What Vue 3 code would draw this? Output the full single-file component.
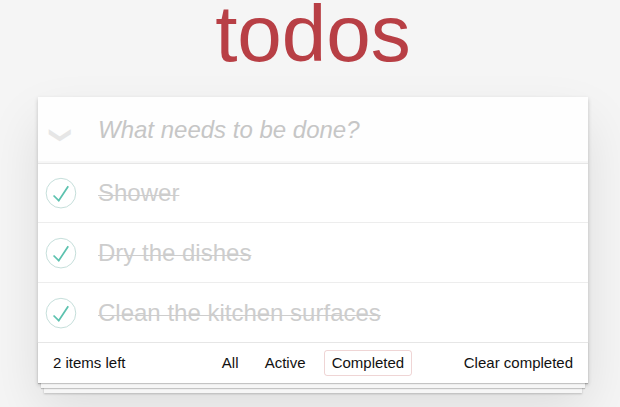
<script setup>
import { ref, computed } from 'vue'

const todos = ref([
  { id: 1, title: 'Shower' },
  { id: 2, title: 'Dry the dishes' },
  { id: 3, title: 'Clean the kitchen surfaces' }
])
const remaining = 2
const filters = ['All', 'Active', 'Completed']
const current = ref('Completed')
const label = computed(() => `${remaining} items left`)
</script>

<template>
  <section class="todoapp">
    <h1>todos</h1>
    <div class="card">
      <header class="entry">
        <span class="toggle">❯</span>
        <input class="new-todo" placeholder="What needs to be done?" />
      </header>
      <ul class="list">
        <li v-for="todo in todos" :key="todo.id">
          <svg class="check" width="40" height="40" viewBox="-10 -18 100 135">
            <circle cx="50" cy="50" r="50" fill="none" stroke="#bddad5" stroke-width="3" />
            <path fill="#5dc2af" d="M72 25L42 71 27 56l-4 4 20 20 34-52z" />
          </svg>
          <label>{{ todo.title }}</label>
        </li>
      </ul>
      <footer class="footer">
        <span class="count">{{ label }}</span>
        <nav class="filters">
          <a v-for="f in filters" :key="f" :class="{ selected: f === current }" @click="current = f">{{ f }}</a>
        </nav>
        <button class="clear">Clear completed</button>
      </footer>
    </div>
  </section>
</template>

<style>
body {
  background: #f5f5f5;
}
</style>

<style scoped>
.todoapp {
  box-sizing: border-box;
  width: 550px;
  height: 407px;
  margin-left: 38px;
  font-family: "Liberation Sans", Arial, sans-serif;
  color: #111;
}
h1 {
  margin: 0;
  height: 97px;
  line-height: 68px;
  font-size: 80px;
  font-weight: 400;
  text-align: center;
  color: #b83f45;
}
.card {
  background: #fff;
  box-shadow: 0 2px 4px 0 rgba(0, 0, 0, 0.2), 0 25px 50px 0 rgba(0, 0, 0, 0.1);
}
.entry {
  display: flex;
  height: 65.6px;
  background: rgba(0, 0, 0, 0.003);
  box-shadow: inset 0 -2px 1px rgba(0, 0, 0, 0.03);
}
.toggle {
  display: flex;
  align-items: center;
  justify-content: center;
  flex: none;
  width: 45px;
  height: 65px;
  font-size: 22px;
  color: #e6e6e6;
  transform: translate(1px, 5px) rotate(90deg);
}
.new-todo {
  flex: 1;
  min-width: 0;
  padding: 0 16px 0 15px;
  border: 0;
  outline: 0;
  background: none;
  font: 24px "Liberation Sans", Arial, sans-serif;
}
.new-todo::placeholder {
  font-style: italic;
  color: #c6c6c6;
}
.list {
  margin: 0;
  padding: 0;
  list-style: none;
  border-top: 1px solid #e6e6e6;
}
.list li {
  display: flex;
  align-items: center;
  height: 58.8px;
  border-bottom: 1px solid #ededed;
}
.list li:last-child {
  border-bottom: 0;
}
.check {
  flex: none;
}
.list label {
  margin-left: 20px;
  padding-top: 0.7px;
  font-size: 24px;
  line-height: 28.8px;
  color: #cdcdcd;
  text-decoration: underline 1px;
  text-decoration-skip-ink: none;
  text-underline-offset: -6px;
}
.footer {
  display: grid;
  grid-template-columns: 1fr auto 1fr;
  align-items: center;
  box-sizing: border-box;
  height: 41px;
  padding: 0 15px;
  border-top: 1px solid #e6e6e6;
  font-size: 15px;
  box-shadow: 0 1px 1px rgba(0, 0, 0, 0.2), 0 8px 0 -3px #f6f6f6,
    0 9px 1px -3px rgba(0, 0, 0, 0.2), 0 16px 0 -6px #f6f6f6,
    0 17px 2px -6px rgba(0, 0, 0, 0.2);
}
.filters {
  display: flex;
  gap: 10.16px;
}
.filters a {
  padding: 3px 7px;
  border: 1px solid transparent;
  border-radius: 3px;
  line-height: 18px;
  cursor: pointer;
}
.filters .selected {
  border-color: rgba(175, 47, 47, 0.2);
}
.clear {
  justify-self: end;
  padding: 0;
  border: 0;
  background: none;
  font: inherit;
  color: inherit;
}
</style>
